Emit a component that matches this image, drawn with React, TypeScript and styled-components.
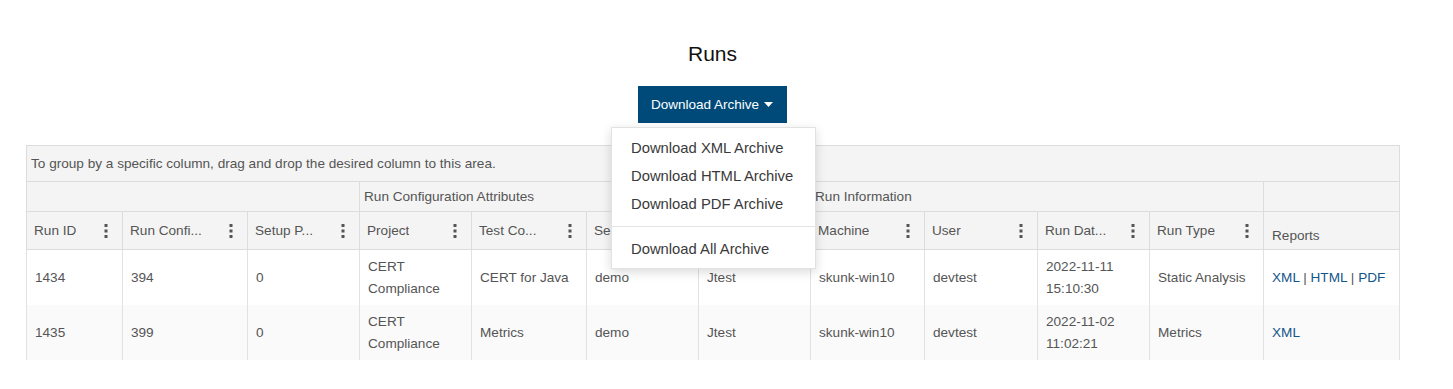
import styled, { createGlobalStyle } from "styled-components";

const GlobalStyle = createGlobalStyle`
  body {
    margin: 0;
    background: #fff;
    font-family: "Liberation Sans", Arial, sans-serif;
  }
`;

const Page = styled.div`
  width: 1373px;
  padding: 42px 0 0 26px;
`;

const Title = styled.h1`
  margin: 0;
  font-size: 21px;
  line-height: 24px;
  font-weight: 400;
  color: #111;
  text-align: center;
`;

const Toolbar = styled.div`
  display: flex;
  justify-content: center;
  margin: 20px 0 22px;
`;

const MenuAnchor = styled.div`
  position: relative;
`;

const DownloadButton = styled.button`
  display: flex;
  align-items: center;
  gap: 5px;
  height: 37px;
  padding: 0 14px 0 13px;
  border: none;
  background: #004a7a;
  color: #fff;
  font-family: inherit;
  font-size: 13.5px;
  cursor: pointer;
`;

const Menu = styled.ul`
  position: absolute;
  top: 41px;
  left: -27px;
  width: 205px;
  margin: 0;
  padding: 6px 0 5px;
  list-style: none;
  background: #fff;
  border: 1px solid #e2e2e2;
  box-shadow: 0 3px 10px rgba(0, 0, 0, 0.15);
  z-index: 10;
  box-sizing: border-box;
`;

const MenuItem = styled.li`
  height: 28px;
  line-height: 28px;
  padding-left: 19px;
  font-size: 14.8px;
  color: #3a3a3a;
  white-space: nowrap;
`;

const MenuDivider = styled.li`
  height: 1px;
  margin: 8px 0;
  background: #e4e4e4;
`;

const Grid = styled.table`
  width: 1373px;
  border-collapse: collapse;
  table-layout: fixed;
  font-size: 13.6px;
  color: #555;
`;

const GroupCell = styled.td`
  height: 35px;
  padding: 0 4px;
  background: #f4f4f4;
  border: 1px solid #dcdcdc;
`;

const BandCell = styled.th`
  height: 29px;
  padding: 0 4px;
  background: #f4f4f4;
  border: 1px solid #dcdcdc;
  font-weight: 400;
  text-align: left;
`;

const HeadCell = styled.th<{ $low?: boolean }>`
  height: ${(p) => (p.$low ? "27px" : "37px")};
  padding: ${(p) => (p.$low ? "10px 8px 0" : "0 8px 0 7px")};
  background: #f4f4f4;
  border: 1px solid #dcdcdc;
  font-weight: 400;
  text-align: left;
`;

const HeadInner = styled.div`
  display: flex;
  align-items: center;
  justify-content: space-between;
  padding-right: 6px;
`;

const HeadLabel = styled.span`
  white-space: nowrap;
  overflow: hidden;
`;

const BodyRow = styled.tr<{ $alt?: boolean }>`
  background: ${(p) => (p.$alt ? "#fafafa" : "#fff")};
`;

const Cell = styled.td`
  height: 55px;
  padding: 0 8px;
  line-height: 22px;
  border-left: 1px solid #e2e2e2;
  border-right: 1px solid #e2e2e2;
  vertical-align: middle;
`;

const ReportLink = styled.a`
  color: #15568a;
  text-decoration: none;
`;

const Caret = () => (
  <svg width="9" height="5" viewBox="0 0 9 5">
    <path d="M0 0h9L4.5 5z" fill="#fff" />
  </svg>
);

const Kebab = () => (
  <svg width="4" height="14" viewBox="0 0 4 14">
    <rect x="0.5" y="0" width="3" height="3" fill="#555" />
    <rect x="0.5" y="5.5" width="3" height="3" fill="#555" />
    <rect x="0.5" y="11" width="3" height="3" fill="#555" />
  </svg>
);

const widths = [96, 125, 112, 112, 115, 112, 112, 114, 113, 112, 114, 136];

const columns = [
  "Run ID",
  "Run Confi...",
  "Setup P...",
  "Project",
  "Test Co...",
  "Session",
  "Tool",
  "Machine",
  "User",
  "Run Dat...",
  "Run Type",
];

interface Run {
  id: string;
  config: string;
  setup: string;
  project: string[];
  test: string;
  session: string;
  tool: string;
  machine: string;
  user: string;
  date: string[];
  type: string;
  reports: string[];
}

const runs: Run[] = [
  {
    id: "1434",
    config: "394",
    setup: "0",
    project: ["CERT", "Compliance"],
    test: "CERT for Java",
    session: "demo",
    tool: "Jtest",
    machine: "skunk-win10",
    user: "devtest",
    date: ["2022-11-11", "15:10:30"],
    type: "Static Analysis",
    reports: ["XML", "HTML", "PDF"],
  },
  {
    id: "1435",
    config: "399",
    setup: "0",
    project: ["CERT", "Compliance"],
    test: "Metrics",
    session: "demo",
    tool: "Jtest",
    machine: "skunk-win10",
    user: "devtest",
    date: ["2022-11-02", "11:02:21"],
    type: "Metrics",
    reports: ["XML"],
  },
];

const Lines = ({ lines }: { lines: string[] }) => (
  <>
    {lines.map((l, i) => (
      <div key={i}>{l}</div>
    ))}
  </>
);

export default function App() {
  return (
    <>
      <GlobalStyle />
      <Page>
        <Title>Runs</Title>
        <Toolbar>
          <MenuAnchor>
            <DownloadButton>
              Download Archive <Caret />
            </DownloadButton>
            <Menu>
              <MenuItem>Download XML Archive</MenuItem>
              <MenuItem>Download HTML Archive</MenuItem>
              <MenuItem>Download PDF Archive</MenuItem>
              <MenuDivider />
              <MenuItem>Download All Archive</MenuItem>
            </Menu>
          </MenuAnchor>
        </Toolbar>
        <Grid>
          <colgroup>
            {widths.map((w, i) => (
              <col key={i} style={{ width: w }} />
            ))}
          </colgroup>
          <thead>
            <tr>
              <GroupCell colSpan={12}>
                To group by a specific column, drag and drop the desired column to this area.
              </GroupCell>
            </tr>
            <tr>
              <BandCell colSpan={3} />
              <BandCell colSpan={4}>Run Configuration Attributes</BandCell>
              <BandCell colSpan={4}>Run Information</BandCell>
              <BandCell />
            </tr>
            <tr>
              {columns.map((c) => (
                <HeadCell key={c}>
                  <HeadInner>
                    <HeadLabel>{c}</HeadLabel>
                    <Kebab />
                  </HeadInner>
                </HeadCell>
              ))}
              <HeadCell $low>Reports</HeadCell>
            </tr>
          </thead>
          <tbody>
            {runs.map((r, i) => (
              <BodyRow key={r.id} $alt={i % 2 === 1}>
                <Cell>{r.id}</Cell>
                <Cell>{r.config}</Cell>
                <Cell>{r.setup}</Cell>
                <Cell>
                  <Lines lines={r.project} />
                </Cell>
                <Cell>{r.test}</Cell>
                <Cell>{r.session}</Cell>
                <Cell>{r.tool}</Cell>
                <Cell>{r.machine}</Cell>
                <Cell>{r.user}</Cell>
                <Cell>
                  <Lines lines={r.date} />
                </Cell>
                <Cell>{r.type}</Cell>
                <Cell>
                  {r.reports.map((rep, j) => (
                    <span key={rep}>
                      {j > 0 && " | "}
                      <ReportLink href="#">{rep}</ReportLink>
                    </span>
                  ))}
                </Cell>
              </BodyRow>
            ))}
          </tbody>
        </Grid>
      </Page>
    </>
  );
}
